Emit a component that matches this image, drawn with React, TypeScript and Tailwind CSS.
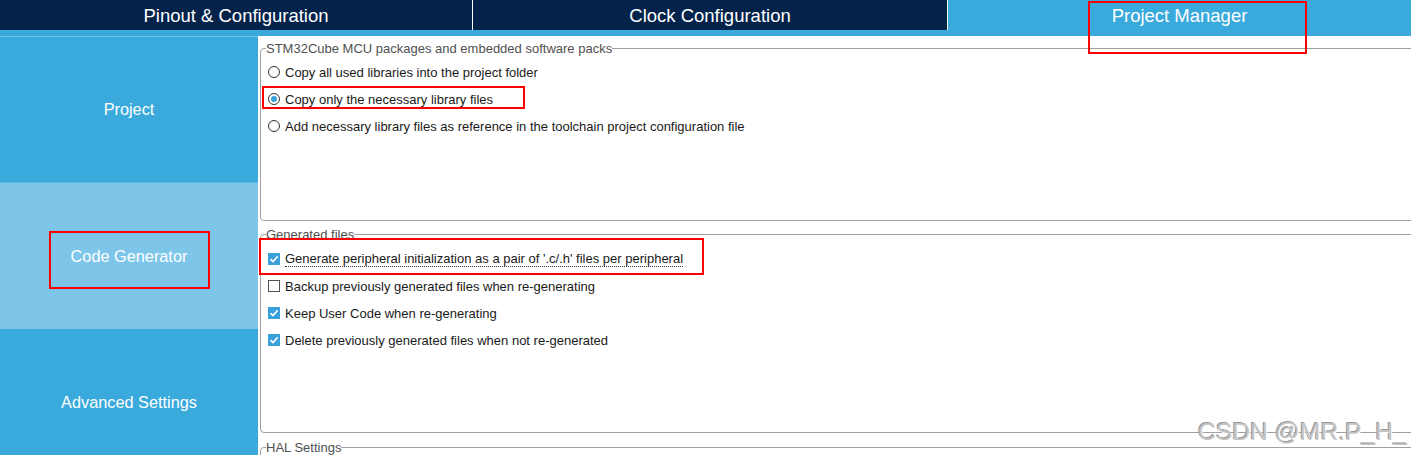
import React from "react";

const navy = "bg-[#03234b]";

const Radio = ({ checked = false }: { checked?: boolean }) => (
  <span className="w-[12px] h-[12px] rounded-full border border-[#333] bg-white flex items-center justify-center shrink-0">
    {checked && <span className="w-[6px] h-[6px] rounded-full bg-[#3aa0dc]" />}
  </span>
);

const Check = ({ checked = false }: { checked?: boolean }) =>
  checked ? (
    <span className="w-[12px] h-[12px] bg-[#3aa0dc] flex items-center justify-center shrink-0">
      <svg width="10" height="10" viewBox="0 0 10 10">
        <path d="M1.5 5.2 L4 7.5 L8.6 2.4" stroke="#fff" strokeWidth="1.6" fill="none" />
      </svg>
    </span>
  ) : (
    <span className="w-[12px] h-[12px] border border-[#555] bg-white shrink-0" />
  );

const Row = ({ control, label, dotted = false }: { control: React.ReactNode; label: string; dotted?: boolean }) => (
  <div className="h-[27px] flex items-center gap-[5px]">
    {control}
    <span className={dotted ? "border-b border-dotted border-[#333] leading-[15px]" : "leading-[15px]"}>{label}</span>
  </div>
);

const RedBox = ({ className }: { className: string }) => (
  <div className={"absolute border-2 border-[#ff0000] pointer-events-none " + className} />
);

export default function App() {
  return (
    <div className="relative w-[1411px] h-[455px] overflow-hidden bg-white font-['Liberation_Sans',Arial,sans-serif]">
      {/* Top tabs */}
      <div className="flex h-[30px] text-white text-[18.5px]">
        <div className={`w-[472px] ${navy} flex items-center justify-center pt-[1px]`}>Pinout &amp; Configuration</div>
        <div className="w-[1px] bg-white" />
        <div className={`w-[474px] ${navy} flex items-center justify-center pt-[1px]`}>Clock Configuration</div>
        <div className="w-[1px] bg-white" />
        <div className="flex-1 bg-[#3aa9db] flex items-center justify-center pt-[1px]">Project Manager</div>
      </div>
      <div className="h-[6px] bg-[#3aa9db]" />

      <div className="flex">
        {/* Sidebar */}
        <div className="w-[258px] shrink-0 flex flex-col text-white text-[16.3px]">
          <div className="h-[146px] bg-[#3aa9db] border-t border-[#6cc0e8] flex items-center justify-center">Project</div>
          <div className="h-[1px] bg-[#5fb9e6]" />
          <div className="h-[146px] bg-[#7dc6ea] flex items-center justify-center">Code Generator</div>
          <div className="h-[146px] bg-[#3aa9db] flex items-center justify-center">Advanced Settings</div>
        </div>

        {/* Content */}
        <div className="flex-1 overflow-hidden pl-[2px] text-[13px] text-[#1a1a1a]">
          <fieldset className="w-[1170px] h-[182px] mt-[3px] border border-[#a0a0a0] rounded-[4px] pl-[7px]">
            <legend className="-ml-[2px] text-[#505050]">STM32Cube MCU packages and embedded software packs</legend>
            <Row control={<Radio />} label="Copy all used libraries into the project folder" />
            <Row control={<Radio checked />} label="Copy only the necessary library files" />
            <Row control={<Radio />} label="Add necessary library files as reference in the toolchain project configuration file" />
          </fieldset>

          <fieldset className="w-[1170px] h-[208px] mt-[4px] border border-[#a0a0a0] rounded-[4px] pl-[7px] pt-[1px]">
            <legend className="-ml-[2px] text-[#505050]">Generated files</legend>
            <Row control={<Check checked />} label="Generate peripheral initialization as a pair of '.c/.h' files per peripheral" dotted />
            <Row control={<Check />} label="Backup previously generated files when re-generating" />
            <Row control={<Check checked />} label="Keep User Code when re-generating" />
            <Row control={<Check checked />} label="Delete previously generated files when not re-generated" />
          </fieldset>

          <fieldset className="w-[1170px] h-[60px] mt-[5px] border border-[#a0a0a0] rounded-[4px] pl-[7px]">
            <legend className="-ml-[2px] text-[#505050]">HAL Settings</legend>
          </fieldset>
        </div>
      </div>

      {/* Annotations */}
      <RedBox className="left-[1088px] top-[1px] w-[219px] h-[53px]" />
      <RedBox className="left-[262px] top-[86px] w-[263px] h-[23px]" />
      <RedBox className="left-[259px] top-[238px] w-[445px] h-[37px]" />
      <RedBox className="left-[49px] top-[231px] w-[161px] h-[58px]" />

      <div className="absolute left-[1198px] top-[413px] text-[24.7px] text-[#c4c4c4] [text-shadow:1px_1px_0_#fff,-1px_-1px_0_#999]">
        CSDN @MR.P_H_
      </div>
    </div>
  );
}
